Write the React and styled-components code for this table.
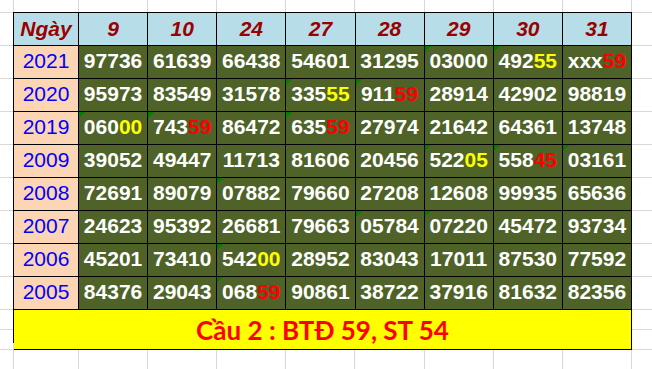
import { Fragment } from "react";
import styled, { createGlobalStyle } from "styled-components";

const GlobalStyle = createGlobalStyle`
  html, body {
    margin: 0;
    padding: 0;
    background-color: #ffffff;
  }
  body {
    width: 652px;
    height: 369px;
    overflow: hidden;
    font-family: "Liberation Sans", Arial, sans-serif;
    background-image:
      linear-gradient(90deg, #d9d9d9 0 1px, transparent 1px),
      repeating-linear-gradient(90deg, #d9d9d9 0 1px, transparent 1px 69.125px),
      repeating-linear-gradient(180deg, #d9d9d9 0 1px, transparent 1px 33px),
      repeating-linear-gradient(180deg, #d9d9d9 0 1px, transparent 1px 20px);
    background-position: 13px 0, 78px 0, 0 12px, 0 309px;
    background-size: 1px 100%, calc(100% - 78px) 100%, 100% 297px, 100% 80px;
    background-repeat: no-repeat;
  }
`;

const Sheet = styled.div`
  padding: 12px 0 0 13px;
`;

const Table = styled.div`
  width: 619px;
  display: grid;
  grid-template-columns: 65px repeat(8, 1fr);
  grid-auto-rows: 33px;
  border-top: 1px solid #000;
  border-left: 1px solid #000;
  box-sizing: border-box;
`;

const Cell = styled.div`
  position: relative;
  box-sizing: border-box;
  border-right: 1px solid #000;
  border-bottom: 1px solid #000;
  display: flex;
  align-items: center;
  justify-content: center;
  padding-bottom: 2px;
  font-size: 21px;
  white-space: nowrap;
`;

const HeadCell = styled(Cell)`
  background: #b7dee8;
  color: #990000;
  font-weight: bold;
  font-style: italic;
  padding-bottom: 0;
`;

const YearCell = styled(Cell)`
  background: #fcd5b4;
  color: #0000ff;
`;

const NumCell = styled(Cell)`
  background: #4f6228;
  color: #ffffff;
  font-weight: bold;

  ${({ $text }) =>
    $text &&
    `
    &::before {
      content: "";
      position: absolute;
      top: 0;
      left: 0;
      border-top: 6px solid #008000;
      border-right: 6px solid transparent;
    }
  `}
`;

const Mark = styled.span`
  color: ${({ $tone }) => ($tone === "red" ? "#ff0000" : "#ffff00")};
`;

const Footer = styled.div`
  grid-column: 1 / -1;
  height: 40px;
  box-sizing: border-box;
  border-right: 1px solid #000;
  border-bottom: 1px solid #000;
  background: #ffff00;
  color: #ff0000;
  font-family: Lato, "Open Sans", sans-serif;
  font-weight: bold;
  font-size: 26px;
  display: flex;
  align-items: center;
  justify-content: center;
`;

const days = ["9", "10", "24", "27", "28", "29", "30", "31"];

// [number, highlighted tail, tone, stored as text]
const rows = [
  ["2021", [["97736"], ["61639"], ["66438"], ["54601"], ["31295"], ["03000", 0, 0, 1], ["492", "55", "yellow", 1], ["xxx", "59", "red"]]],
  ["2020", [["95973"], ["83549"], ["31578"], ["335", "55", "yellow", 1], ["911", "59", "red", 1], ["28914"], ["42902"], ["98819"]]],
  ["2019", [["060", "00", "yellow", 1], ["743", "59", "red", 1], ["86472"], ["635", "59", "red", 1], ["27974"], ["21642"], ["64361"], ["13748"]]],
  ["2009", [["39052"], ["49447"], ["11713"], ["81606"], ["20456"], ["522", "05", "yellow", 1], ["558", "45", "red", 1], ["03161", 0, 0, 1]]],
  ["2008", [["72691"], ["89079"], ["07882", 0, 0, 1], ["79660"], ["27208"], ["12608"], ["99935"], ["65636"]]],
  ["2007", [["24623"], ["95392"], ["26681"], ["79663"], ["05784", 0, 0, 1], ["07220", 0, 0, 1], ["45472"], ["93734"]]],
  ["2006", [["45201"], ["73410"], ["542", "00", "yellow", 1], ["28952"], ["83043"], ["17011"], ["87530"], ["77592"]]],
  ["2005", [["84376"], ["29043"], ["068", "59", "red", 1], ["90861"], ["38722"], ["37916"], ["81632"], ["82356"]]],
];

export default function App() {
  return (
    <>
      <GlobalStyle />
      <Sheet>
        <Table>
          <HeadCell>Ngày</HeadCell>
          {days.map((d) => (
            <HeadCell key={d}>{d}</HeadCell>
          ))}
          {rows.map(([year, values]) => (
            <Fragment key={year}>
              <YearCell>{year}</YearCell>
              {values.map(([head, tail, tone, text], i) => (
                <NumCell key={i} $text={!!text}>
                  {head}
                  {tail ? <Mark $tone={tone}>{tail}</Mark> : null}
                </NumCell>
              ))}
            </Fragment>
          ))}
          <Footer>Cầu 2 : BTĐ 59, ST 54</Footer>
        </Table>
      </Sheet>
    </>
  );
}
